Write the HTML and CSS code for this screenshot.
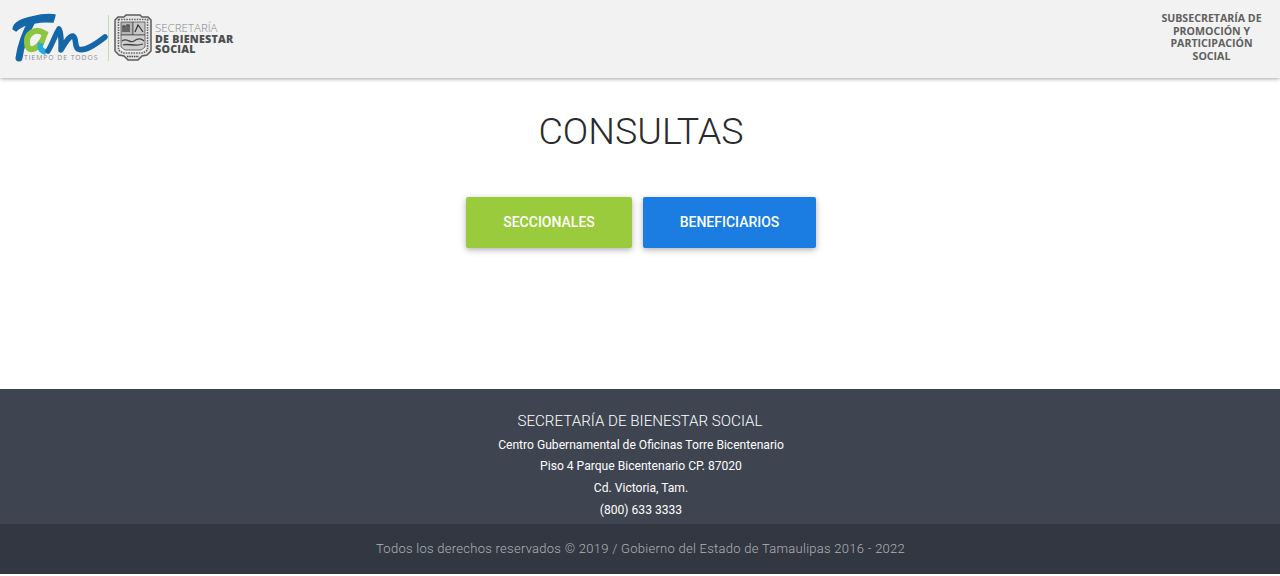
FILE: index.html
```html
<!DOCTYPE html>
<html lang="es">
<head>
<meta charset="utf-8">
<title>Consultas</title>
<link rel="stylesheet" href="styles.css">
</head>
<body>
<header class="topbar">
  <div class="brand">
    <div class="tam">
      <svg class="tam-mark" viewBox="0 0 96 50" width="96" height="50" aria-hidden="true">
        <path d="M1 16C2 8 12 6 20 4C28 2 36 1 43 2L41 9C33 8 27 9 22 10C15 11 9 13 4 18Z" fill="#1467a8" stroke="#1467a8" stroke-width="1.5" stroke-linejoin="round"/>
        <path d="M20 8C15 17 9 31 7 45" fill="none" stroke="#1467a8" stroke-width="7" stroke-linecap="round"/>
        <path d="M32 20C22 14 14 22 15 30C15 39 24 38 30 28" fill="none" stroke="#8cc63f" stroke-width="6"/>
        <path d="M34 18L29 31" fill="none" stroke="#8cc63f" stroke-width="5.5"/>
        <path d="M29 30C27 35 29 38 34 39" fill="none" stroke="#29abe2" stroke-width="5.5"/>
        <path d="M36 38C40 32 43 22 47 16C50 22 49 31 49 37C53 30 57 23 61 23C65 25 62 33 66 36C73 39 84 31 93 24" fill="none" stroke="#1467a8" stroke-width="5.5" stroke-linecap="round" stroke-linejoin="round"/>
      </svg>
      <span class="tagline">TIEMPO DE TODOS</span>
    </div>
    <span class="divider"></span>
    <svg class="shield" viewBox="0 0 38 48" width="38" height="48" aria-hidden="true">
      <path d="M4 3H10L12 1H26L28 3H34L37 6V37L33 41L28 42L24 46H14L10 42L5 41L1 37V6Z" fill="#e4e4e4" stroke="#5c5c5c" stroke-width="1.5"/>
      <path d="M4.5 5.5H33.5V36L29 39H9L4.5 36Z" fill="#efefef" stroke="#666" stroke-width="1.6" stroke-dasharray="1.6 1"/>
      <rect x="7" y="8" width="12" height="13" fill="#b5b5b5" stroke="#4f4f4f" stroke-width=".8"/>
      <rect x="19" y="8" width="12" height="13" fill="#c8c8c8" stroke="#4f4f4f" stroke-width=".8"/>
      <path d="M9 18V12H11V18M13 18V11H15V18M21 18L24 11L27 15L29 18" fill="none" stroke="#333" stroke-width="1.2"/>
      <path d="M7 21H31V33L27 36H11L7 33Z" fill="#cfcfcf" stroke="#4f4f4f" stroke-width=".8"/>
      <path d="M8 27C13 23 16 30 20 27S27 24 30 27M9 31C14 29 22 33 29 30" fill="none" stroke="#444" stroke-width="1.3"/>
      <path d="M13 42.5H25" stroke="#444" stroke-width="1.4" stroke-dasharray="1.5 .8"/>
    </svg>
    <div class="dept">
      <span class="dept-light">SECRETARÍA</span>
      <span class="dept-bold">DE BIENESTAR</span>
      <span class="dept-bold">SOCIAL</span>
    </div>
  </div>
  <div class="subsec">SUBSECRETARÍA DE<br>PROMOCIÓN Y<br>PARTICIPACIÓN<br>SOCIAL</div>
</header>
<main class="content">
  <h1 class="title">CONSULTAS</h1>
  <div class="actions">
    <a class="btn btn-green" href="#">SECCIONALES</a>
    <a class="btn btn-blue" href="#">BENEFICIARIOS</a>
  </div>
</main>
<footer>
  <div class="foot-main">
    <p class="foot-title">SECRETARÍA DE BIENESTAR SOCIAL</p>
    <p class="foot-line">Centro Gubernamental de Oficinas Torre Bicentenario</p>
    <p class="foot-line">Piso 4 Parque Bicentenario CP. 87020</p>
    <p class="foot-line">Cd. Victoria, Tam.</p>
    <p class="foot-line">(800) 633 3333</p>
  </div>
  <div class="foot-legal">Todos los derechos reservados © 2019 / Gobierno del Estado de Tamaulipas 2016 - 2022</div>
</footer>
</body>
</html>
```
FILE: styles.css
```css
* { box-sizing: border-box; }
html, body { margin: 0; padding: 0; }
body { height: 576px; overflow: hidden; background: #fff; font-family: Roboto, sans-serif; display: flex; flex-direction: column; }
.topbar { height: 78px; flex: none; background: #f2f2f2; box-shadow: 0 1px 4px rgba(0,0,0,.35); display: flex; justify-content: space-between; align-items: flex-start; padding: 13px 16px 0 12px; position: relative; }
.brand { display: flex; align-items: flex-start; }
.tam { width: 95px; height: 50px; position: relative; }
.tam-mark { display: block; }
.tagline { position: absolute; left: 12px; top: 41px; font: 400 6.8px/8px "Open Sans", sans-serif; letter-spacing: .95px; color: #8a8f90; white-space: nowrap; }
.divider { width: 1px; height: 46px; margin: 2px 5px 0 1px; background: #c3dcaa; }
.shield { margin-top: 1px; }
.dept { margin: 10px 0 0 3px; display: flex; flex-direction: column; font-family: "Open Sans", sans-serif; font-size: 10.7px; line-height: 10.5px; color: #4d4f50; }
.dept-light { color: #85878a; font-weight: 300; font-size: 11.5px; }
.dept-bold { font-weight: 800; letter-spacing: .25px; }
.subsec { margin-top: -1px; width: 105px; text-align: center; font: 700 10.6px/12.6px "Open Sans", sans-serif; color: #606060; }
.content { flex: 1; display: flex; flex-direction: column; align-items: center; padding-left: 2px; }
.title { margin: 29px 0 0; font-weight: 300; font-size: 37.6px; line-height: 48px; color: #292b2c; }
.actions { margin-top: 42px; display: flex; gap: 11px; }
.btn { height: 51px; padding-bottom: 2px; display: flex; align-items: center; justify-content: center; border-radius: 2px; color: #fff; font-size: 14px; font-weight: 500; text-decoration: none; box-shadow: 0 2px 5px rgba(0,0,0,.2), 0 2px 10px rgba(0,0,0,.12); }
.btn-green { width: 166px; background: #9acb3c; }
.btn-blue { width: 173px; background: #1b7ce2; }
footer { flex: none; margin-bottom: 2px; }
.foot-main { height: 135px; background: #3e4551; padding-top: 22px; text-align: center; color: #fff; }
.foot-main p { margin: 0; }
.foot-title { font-size: 15.15px; font-weight: 300; line-height: 20px; }
.foot-line { padding-left: 2px; font-size: 12.1px; line-height: 21.9px; }
.foot-title + .foot-line { margin-top: 3.5px; }
.foot-legal { height: 50px; padding: 0 0 2px 1px; background: #323741; color: #b0b2b6; display: flex; align-items: center; justify-content: center; font-size: 13px; font-weight: 300; letter-spacing: .27px; }
```
